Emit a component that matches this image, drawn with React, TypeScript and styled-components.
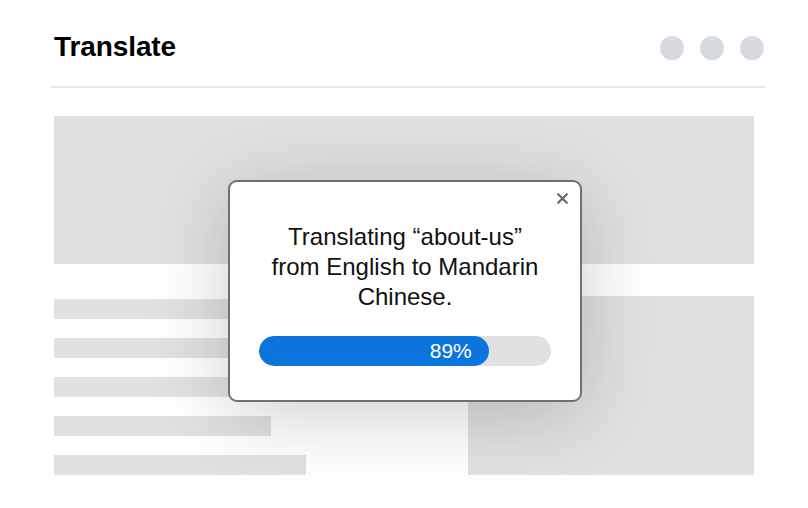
import styled, { createGlobalStyle } from 'styled-components'

const GlobalStyle = createGlobalStyle`
  html, body {
    margin: 0;
    padding: 0;
    background: #ffffff;
  }
  body {
    font-family: "Liberation Sans", Arial, Helvetica, sans-serif;
    color: #000;
  }
`

const progress = 0.787

const App = () => {
    return (
        <>
            <GlobalStyle />
            <Page>
                <Header>
                    <Title>Translate</Title>
                    <Dots>
                        <Dot />
                        <Dot />
                        <Dot />
                    </Dots>
                </Header>
                <Divider />

                <Content>
                    <Hero />
                    <Lower>
                        <Lines>
                            <Line $width={360} />
                            <Line $width={360} />
                            <Line $width={360} />
                            <Line $width={217} />
                            <Line $width={252} />
                        </Lines>
                        <SideBlock />
                    </Lower>

                    <Modal>
                        <Close aria-label="Close">
                            <svg width="11" height="11" viewBox="0 0 11 11">
                                <path d="M1.2 1.2 L9.8 9.8 M9.8 1.2 L1.2 9.8" stroke="#6a6a6a" strokeWidth="2.2" strokeLinecap="round" />
                            </svg>
                        </Close>
                        <Message>
                            Translating “about-us” from English to Mandarin Chinese.
                        </Message>
                        <Track>
                            <Fill style={{ width: `${progress * 100}%` }}>89%</Fill>
                        </Track>
                    </Modal>
                </Content>
            </Page>
        </>
    )
}

export default App

const Page = styled.div`
width: 808px;
height: 508px;
padding: 31px 43px 0 51px;
box-sizing: border-box;
`

const Header = styled.div`
display: flex;
align-items: center;
justify-content: space-between;
height: 32px;
padding: 0 1px 0 3px;
margin-bottom: 23px;
`

const Title = styled.h1`
margin: 0;
font-size: 28px;
line-height: 32px;
font-weight: 700;
letter-spacing: -0.1px;
`

const Dots = styled.div`
display: flex;
gap: 16px;
margin-top: 2px;
`

const Dot = styled.span`
width: 24px;
height: 24px;
border-radius: 50%;
background: #d6dade;
`

const Divider = styled.div`
height: 2px;
background: #e9e9e9;
margin-bottom: 28px;
`

const Content = styled.div`
position: relative;
padding: 0 11px 0 3px;
`

const Hero = styled.div`
height: 148px;
background: #e1e1e1;
`

const Lower = styled.div`
display: grid;
grid-template-columns: 1fr 286px;
margin-top: 32px;
`

const Lines = styled.div`
display: flex;
flex-direction: column;
gap: 19px;
padding-top: 3px;
`

const Line = styled.div<{ $width: number }>`
width: ${p => p.$width}px;
height: 20px;
background: #e1e1e1;
`

const SideBlock = styled.div`
height: 179px;
background: #e1e1e1;
`

const Modal = styled.div`
position: absolute;
left: 177px;
top: 64px;
width: 354px;
box-sizing: border-box;
padding: 40px 28px 34px;
background: #fff;
border: 2px solid #707070;
border-radius: 9px;
box-shadow: 0 12px 80px rgba(0, 0, 0, 0.2);
display: flex;
flex-direction: column;
align-items: center;
`

const Close = styled.button`
position: absolute;
top: 11px;
right: 12px;
padding: 0;
border: 0;
background: none;
display: flex;
cursor: pointer;
`

const Message = styled.p`
margin: 0 0 24px;
width: 280px;
font-size: 24px;
line-height: 30px;
text-align: center;
color: #111;
`

const Track = styled.div`
width: 292px;
height: 30px;
border-radius: 15px;
background: #e1e1e1;
overflow: hidden;
`

const Fill = styled.div`
height: 100%;
border-radius: 15px;
background: #0b74dd;
color: #fff;
font-size: 21px;
line-height: 30px;
text-align: right;
padding-right: 17px;
box-sizing: border-box;
`
